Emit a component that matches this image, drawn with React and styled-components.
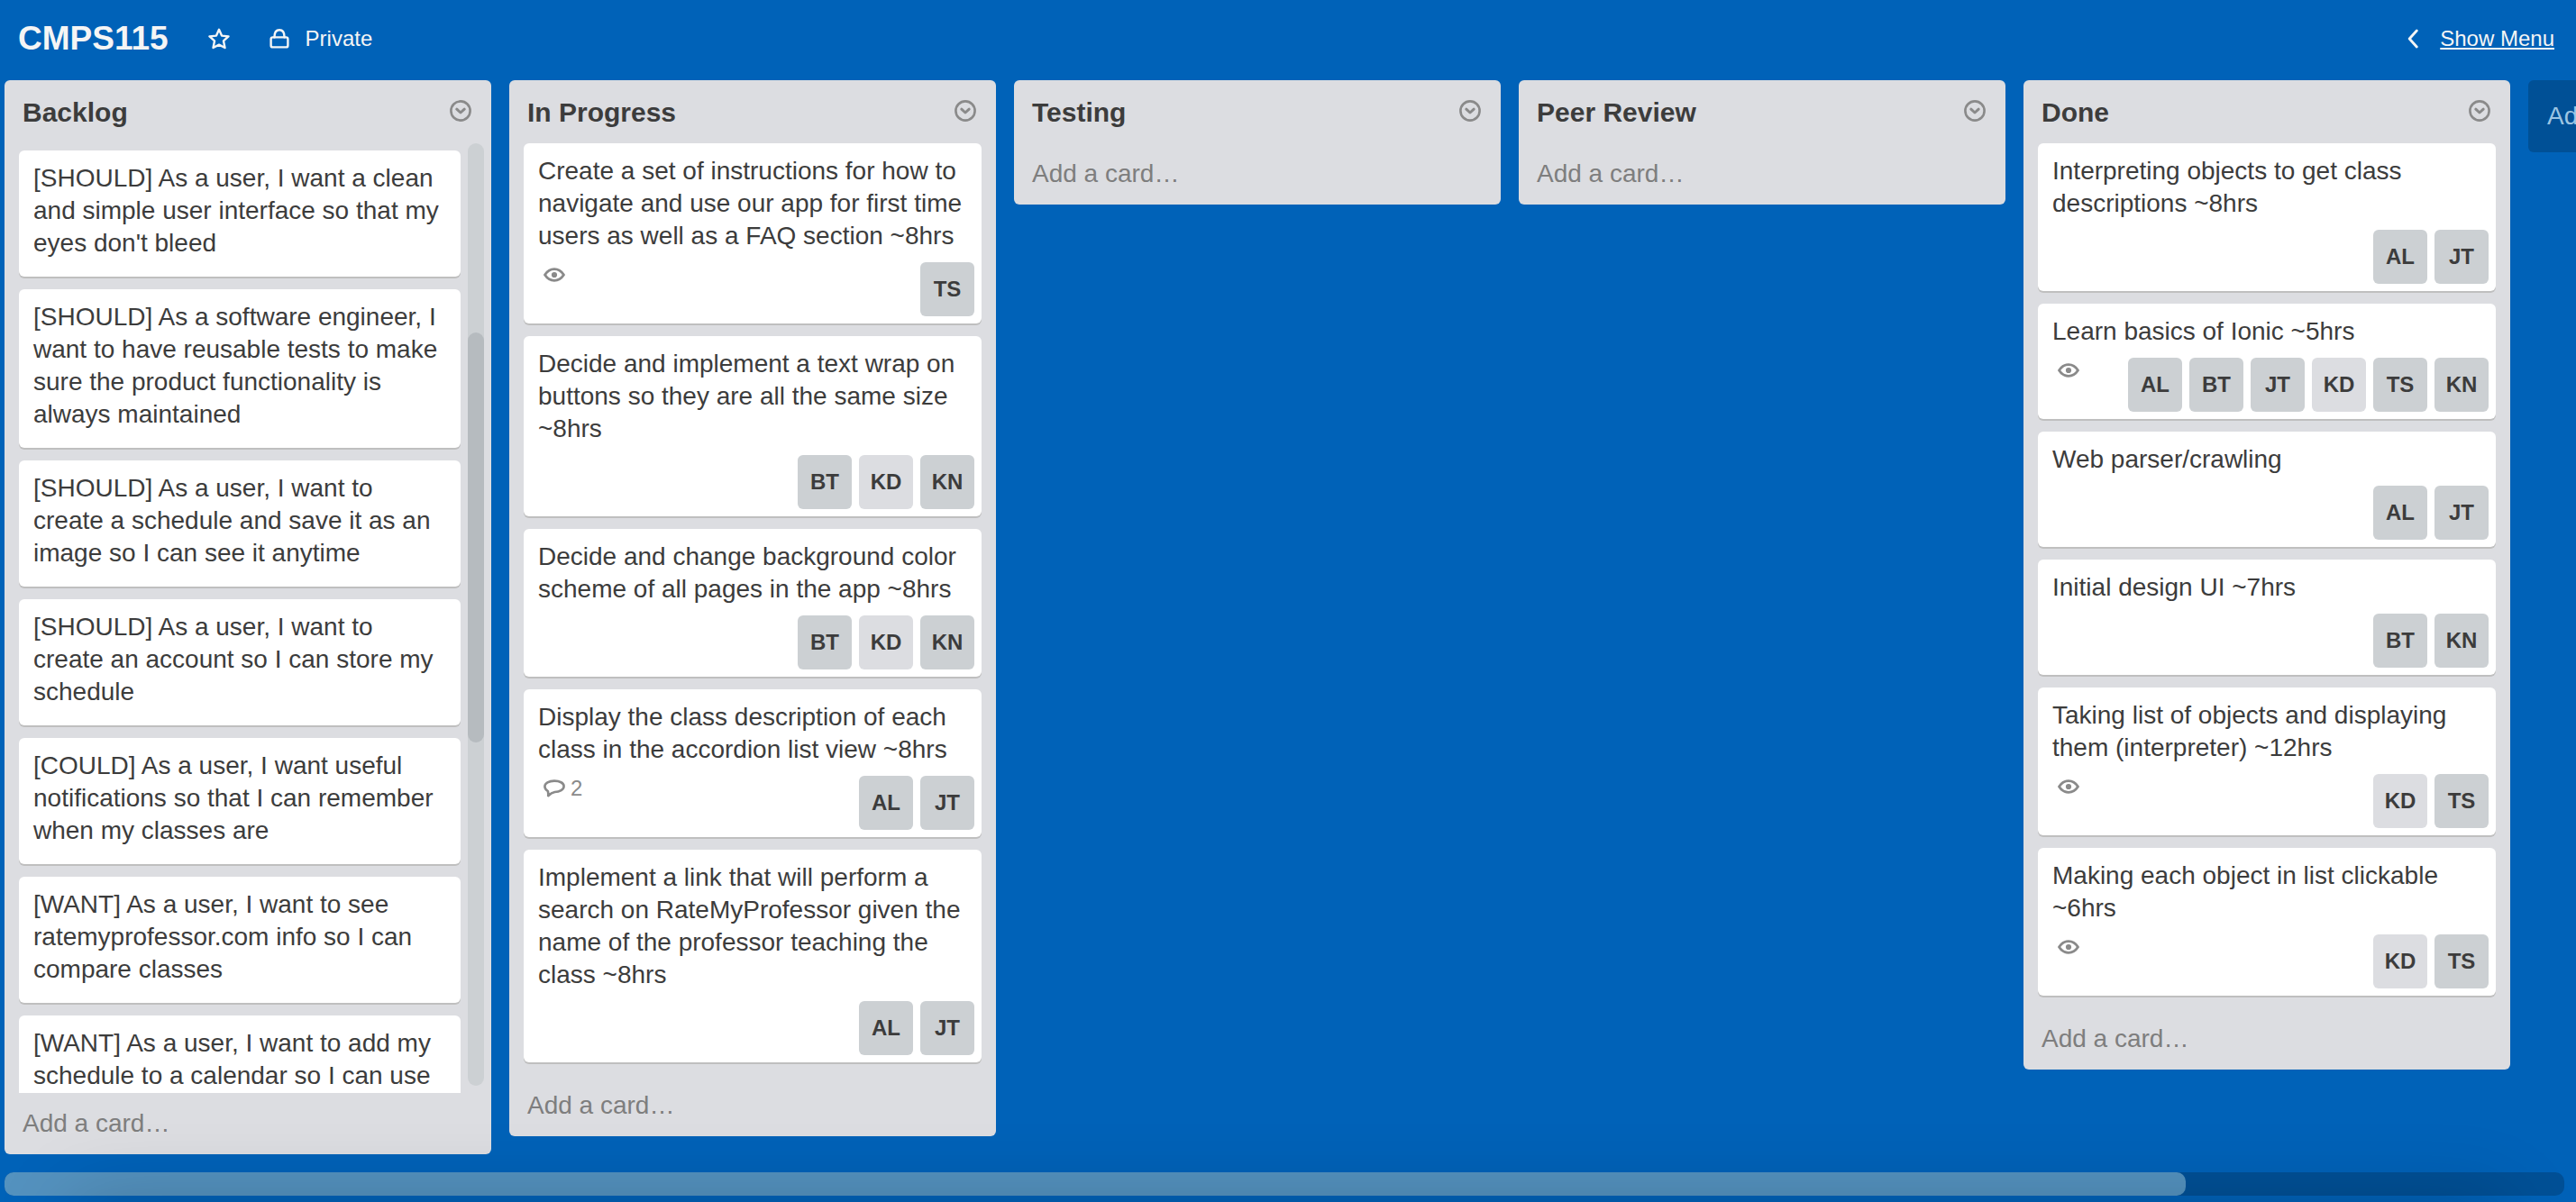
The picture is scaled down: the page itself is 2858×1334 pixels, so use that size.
import React from "react";
import styled, { createGlobalStyle } from "styled-components";

const color = {
  board: "#0062b8",
  track: "#005096",
  thumb: "#5492bf",
  list: "#dcdde1",
  member: "#ccd0d3",
  scrollThumb: "#b6bbbf",
  text: "#3c3c3c",
  muted: "#7e7e7e",
  icon: "#8a8a8a",
  light: "#f5f5f5",
};

const GlobalStyle = createGlobalStyle`
  *, *::before, *::after { box-sizing: border-box; }
  html, body, #root { height: 100%; }
  body {
    margin: 0;
    overflow: hidden;
    background: ${color.board};
    color: ${color.text};
    font: 28px/36px "Liberation Sans", Arial, Helvetica, sans-serif;
  }
  h1, h2, p, ul { margin: 0; padding: 0; }
  ul { list-style: none; }
  svg { display: block; }
`;

const Page = styled.div`
  position: relative;
  display: flex;
  flex-direction: column;
  height: 100%;
  overflow: hidden;
`;

/* Soft shade that rises from the bottom edge, over the lists and the scroll bar. */
const BottomShade = styled.div`
  position: absolute;
  right: 80px;
  bottom: -100px;
  left: 80px;
  height: 100px;
  box-shadow: 0 0 90px rgba(0, 0, 0, 0.2);
  pointer-events: none;
`;

const BoardHeader = styled.header`
  display: flex;
  align-items: center;
  justify-content: space-between;
  flex: none;
  height: 89px;
  padding: 0 24px 4px 20px;
  color: ${color.light};
`;

const HeaderGroup = styled.div`
  display: flex;
  align-items: center;
`;

const BoardTitle = styled.h1`
  margin-right: 44px;
  font-size: 37px;
  line-height: 44px;
`;

const PlainButton = styled.button`
  display: flex;
  align-items: center;
  gap: ${(p) => p.$gap || 0}px;
  margin: 0;
  padding: 0;
  border: 0;
  background: none;
  color: inherit;
  font: inherit;
  cursor: pointer;
`;

const HeaderButton = styled(PlainButton)`
  margin-right: 44px;
  font-size: 24px;
`;

const MenuLink = styled.a`
  display: flex;
  align-items: center;
  gap: 24px;
  color: inherit;
  font-size: 24px;
  text-decoration: none;

  span {
    text-decoration: underline;
    text-decoration-thickness: 2px;
    text-underline-offset: 2px;
    text-decoration-skip-ink: none;
  }
`;

const Lists = styled.main`
  display: flex;
  align-items: flex-start;
  gap: 20px;
  flex: 1;
  min-height: 0;
  padding: 0 0 20px 5px;
  overflow: hidden;
`;

const ListBox = styled.section`
  display: flex;
  flex-direction: column;
  flex: 0 0 540px;
  max-height: 100%;
  border-radius: 6px;
  background: ${color.list};
`;

const ListHeader = styled.header`
  display: flex;
  justify-content: space-between;
  flex: none;
  height: 70px;
  padding: 18px 22px 0 20px;
`;

const ListTitle = styled.h2`
  font-size: 30px;
  line-height: 36px;
`;

const ListMenu = styled(PlainButton)`
  align-self: flex-start;
  height: 32px;
  color: ${color.icon};
`;

const ListBody = styled.div`
  display: flex;
  gap: 8px;
  min-height: 0;
  padding: 0 ${(p) => (p.$scrolls ? 8 : 16)}px 0 16px;
`;

const Cards = styled.div`
  flex: 1;
  min-width: 0;
  padding-top: ${(p) => (p.$scrolls ? 8 : 0)}px;
  overflow: hidden;
`;

const CardBox = styled.article`
  margin-bottom: 14px;
  padding: 13px 8px 0 16px;
  border-radius: 6px;
  background: #fff;
  box-shadow: 0 2px 0 #bfbfbf;
`;

const CardTitle = styled.p`
  padding-right: 4px;
`;

const CardFooter = styled.div`
  display: flex;
  justify-content: space-between;
  min-height: 19px;
`;

const Badge = styled.span`
  display: flex;
  align-items: center;
  gap: 6px;
  height: 36px;
  margin: 7px 0 0 6px;
  color: ${color.icon};
  font-size: 24px;
`;

const Members = styled.ul`
  display: flex;
  gap: 8px;
  margin: 11px 0 8px auto;
`;

const Member = styled(PlainButton)`
  justify-content: center;
  width: 60px;
  height: 60px;
  border-radius: 6px;
  background: ${(p) => (p.$faded ? color.list : color.member)};
  font-size: 24px;
  font-weight: bold;
`;

const ScrollTrack = styled.div`
  flex: 0 0 18px;
  margin-bottom: 8px;
  border-radius: 9px;
  background: ${color.member};
`;

const ScrollThumb = styled.div`
  height: 455px;
  margin-top: 210px;
  border-radius: 9px;
  background: ${color.scrollThumb};
`;

const AddCard = styled(PlainButton)`
  flex: none;
  padding: 16px 20px;
  color: ${color.muted};
`;

const AddList = styled(PlainButton)`
  flex: 0 0 540px;
  height: 80px;
  padding: 0 21px;
  border-radius: 6px;
  background: ${color.track};
  color: #9cc5e3;
`;

const BoardScroll = styled.div`
  flex: none;
  height: 26px;
  margin: 0 13px 7px 5px;
  border-radius: 10px;
  background: ${color.track};
`;

const BoardThumb = styled.div`
  width: 85.2%;
  height: 100%;
  border-radius: 10px;
  background: ${color.thumb};
`;

const Icon = ({ w = 24, h = 24, sw = 2.6, children }) => (
  <svg
    width={w}
    height={h}
    viewBox={`0 0 ${w} ${h}`}
    fill="none"
    stroke="currentColor"
    strokeWidth={sw}
    strokeLinecap="round"
    strokeLinejoin="round"
    aria-hidden="true"
  >
    {children}
  </svg>
);

const StarIcon = () => (
  <Icon sw={2.4}>
    <path d="M12 1.8 L15 8.6 L22.5 9.4 L17 14.4 L18.5 22 L12 18.6 L5.5 22 L7 14.4 L1.5 9.4 L9 8.6 Z" />
  </Icon>
);

const LockIcon = () => (
  <Icon w={22} h={24} sw={2.4}>
    <rect x="1.6" y="10.4" width="18.8" height="11" rx="2" />
    <path d="M5.4 10.4 C5.4 5 7.6 2.2 11 2.2 C14.4 2.2 16.6 5 16.6 10.4" />
  </Icon>
);

const ChevronIcon = () => (
  <Icon w={12} h={22} sw={2.8}>
    <path d="M10.3 2 L2.2 11 L10.3 20" />
  </Icon>
);

const CircleDownIcon = () => (
  <Icon sw={2.6}>
    <circle cx="12" cy="12" r="10.6" />
    <path d="M7.8 10.2 L12 14 L16.2 10.2" strokeWidth="3" />
  </Icon>
);

const EyeIcon = () => (
  <Icon h={16} sw={2.8}>
    <path d="M1.5 8 C7 -0.4 17 -0.4 22.5 8 C17 16.4 7 16.4 1.5 8 Z" />
    <circle cx="12" cy="8" r="3.1" fill="currentColor" stroke="none" />
  </Icon>
);

const CommentIcon = () => (
  <Icon h={20} sw={2.6}>
    <path d="M4.8 13 C2.6 11.6 1.4 9.8 1.4 7.8 C1.4 4 6 1.6 12 1.6 C18 1.6 22.6 4 22.6 7.6 C22.6 11.4 18 14 12.5 14 C9.5 14.6 7.5 16 5.2 18.2 C5.4 16 5.4 14.8 4.8 13 Z" />
  </Icon>
);

const lists = [
  {
    title: "Backlog",
    scrolls: true,
    cards: [
      { text: "[SHOULD] As a user, I want a clean and simple user interface so that my eyes don't bleed" },
      { text: "[SHOULD] As a software engineer, I want to have reusable tests to make sure the product functionality is always maintained" },
      { text: "[SHOULD] As a user, I want to create a schedule and save it as an image so I can see it anytime" },
      { text: "[SHOULD] As a user, I want to create an account so I can store my schedule" },
      { text: "[COULD] As a user, I want useful notifications so that I can remember when my classes are" },
      { text: "[WANT] As a user, I want to see ratemyprofessor.com info so I can compare classes" },
      { text: "[WANT] As a user, I want to add my schedule to a calendar so I can use" },
    ],
  },
  {
    title: "In Progress",
    cards: [
      {
        text: "Create a set of instructions for how to navigate and use our app for first time users as well as a FAQ section ~8hrs",
        watched: true,
        members: ["TS"],
      },
      {
        text: "Decide and implement a text wrap on buttons so they are all the same size ~8hrs",
        members: ["BT", "KD", "KN"],
      },
      {
        text: "Decide and change background color scheme of all pages in the app ~8hrs",
        members: ["BT", "KD", "KN"],
      },
      {
        text: "Display the class description of each class in the accordion list view ~8hrs",
        comments: 2,
        members: ["AL", "JT"],
      },
      {
        text: "Implement a link that will perform a search on RateMyProfessor given the name of the professor teaching the class ~8hrs",
        members: ["AL", "JT"],
      },
    ],
  },
  { title: "Testing", cards: [] },
  { title: "Peer Review", cards: [] },
  {
    title: "Done",
    cards: [
      { text: "Interpreting objects to get class descriptions ~8hrs", members: ["AL", "JT"] },
      {
        text: "Learn basics of Ionic ~5hrs",
        watched: true,
        members: ["AL", "BT", "JT", "KD", "TS", "KN"],
      },
      { text: "Web parser/crawling", members: ["AL", "JT"] },
      { text: "Initial design UI ~7hrs", members: ["BT", "KN"] },
      {
        text: "Taking list of objects and displaying them (interpreter) ~12hrs",
        watched: true,
        members: ["KD", "TS"],
      },
      {
        text: "Making each object in list clickable ~6hrs",
        watched: true,
        members: ["KD", "TS"],
      },
    ],
  },
];

const Card = ({ text, watched, comments, members }) => (
  <CardBox>
    <CardTitle>{text}</CardTitle>
    <CardFooter>
      {watched && (
        <Badge>
          <EyeIcon />
        </Badge>
      )}
      {comments && (
        <Badge>
          <CommentIcon />
          {comments}
        </Badge>
      )}
      {members && (
        <Members>
          {members.map((m) => (
            <li key={m}>
              <Member type="button" $faded={m === "KD"}>
                {m}
              </Member>
            </li>
          ))}
        </Members>
      )}
    </CardFooter>
  </CardBox>
);

const List = ({ title, cards, scrolls }) => (
  <ListBox>
    <ListHeader>
      <ListTitle>{title}</ListTitle>
      <ListMenu type="button" aria-label="List actions">
        <CircleDownIcon />
      </ListMenu>
    </ListHeader>
    {cards.length > 0 && (
      <ListBody $scrolls={scrolls}>
        <Cards $scrolls={scrolls}>
          {cards.map((card) => (
            <Card key={card.text} {...card} />
          ))}
        </Cards>
        {scrolls && (
          <ScrollTrack>
            <ScrollThumb />
          </ScrollTrack>
        )}
      </ListBody>
    )}
    <AddCard type="button">Add a card…</AddCard>
  </ListBox>
);

export default function App() {
  return (
    <>
      <GlobalStyle />
      <Page>
        <BoardHeader>
          <HeaderGroup>
            <BoardTitle>CMPS115</BoardTitle>
            <HeaderButton type="button" aria-label="Star board">
              <StarIcon />
            </HeaderButton>
            <HeaderButton type="button" $gap={18}>
              <LockIcon />
              Private
            </HeaderButton>
          </HeaderGroup>
          <MenuLink href="#menu">
            <ChevronIcon />
            <span>Show Menu</span>
          </MenuLink>
        </BoardHeader>
        <Lists>
          {lists.map((list) => (
            <List key={list.title} {...list} />
          ))}
          <AddList type="button">Add a list…</AddList>
        </Lists>
        <BoardScroll>
          <BoardThumb />
        </BoardScroll>
        <BottomShade />
      </Page>
    </>
  );
}
